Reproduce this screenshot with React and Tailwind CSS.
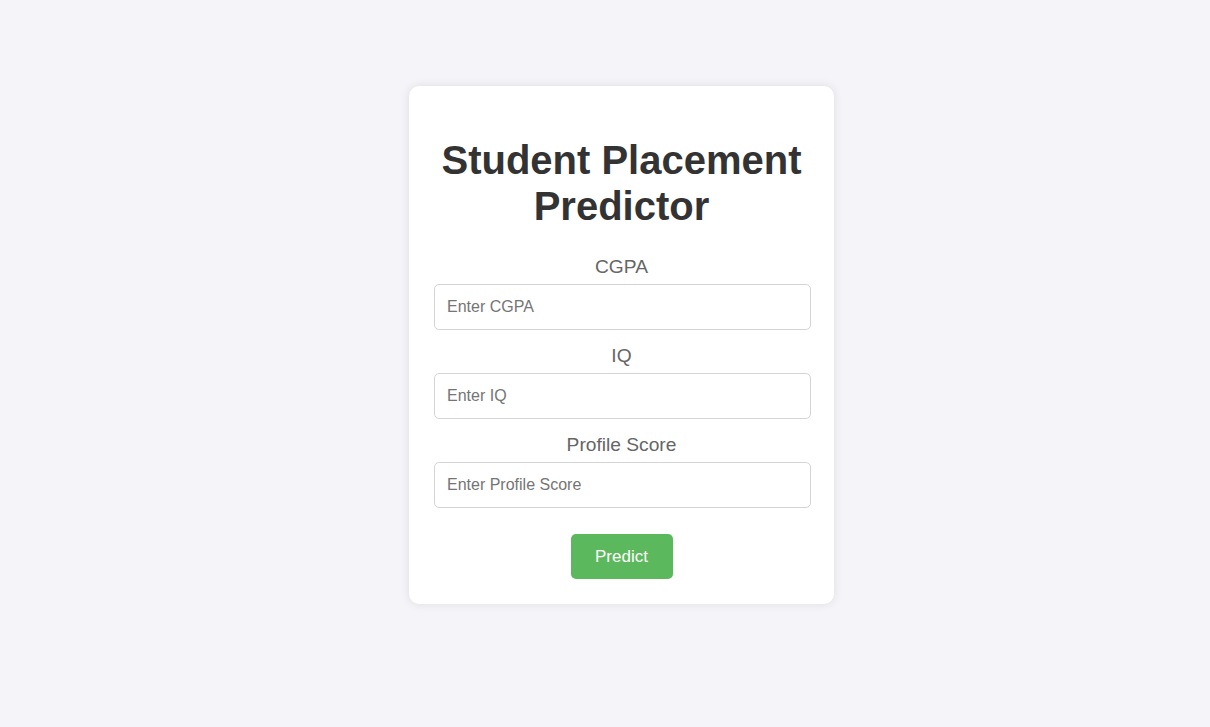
export default function App() {
  const fields = [
    { label: "CGPA", placeholder: "Enter CGPA" },
    { label: "IQ", placeholder: "Enter IQ" },
    { label: "Profile Score", placeholder: "Enter Profile Score" },
  ];

  return (
    <div
      className="min-h-screen bg-[#f4f4f9] flex justify-center items-start pt-[86px] pl-[33px]"
      style={{ fontFamily: '"Liberation Sans", Arial, sans-serif' }}
    >
      <div className="w-[425px] bg-white rounded-[10px] shadow-[0_0_10px_rgba(0,0,0,0.1)] px-[25px] pt-[24px] pb-[25px] text-center">
        <h1 className="text-[40px] leading-[46px] font-bold text-[#333] mt-[27px] mb-[27px]">
          Student Placement Predictor
        </h1>

        <form onSubmit={(e) => e.preventDefault()}>
          {fields.map((f) => (
            <div key={f.label}>
              <label className="block text-[19.2px] leading-[22px] text-[#666] mb-[6px]">
                {f.label}
              </label>
              <input
                type="text"
                placeholder={f.placeholder}
                className="block w-[calc(100%+2px)] h-[46px] border border-[#d4d4d4] rounded-[5px] px-3 text-[16px] text-[#333] placeholder:text-[#757575] mb-[15px] outline-none"
              />
            </div>
          ))}

          <button
            type="submit"
            className="mt-[11px] w-[102px] h-[45px] bg-[#5cb85c] text-white text-[17px] rounded-[5px]"
          >
            Predict
          </button>
        </form>
      </div>
    </div>
  );
}
